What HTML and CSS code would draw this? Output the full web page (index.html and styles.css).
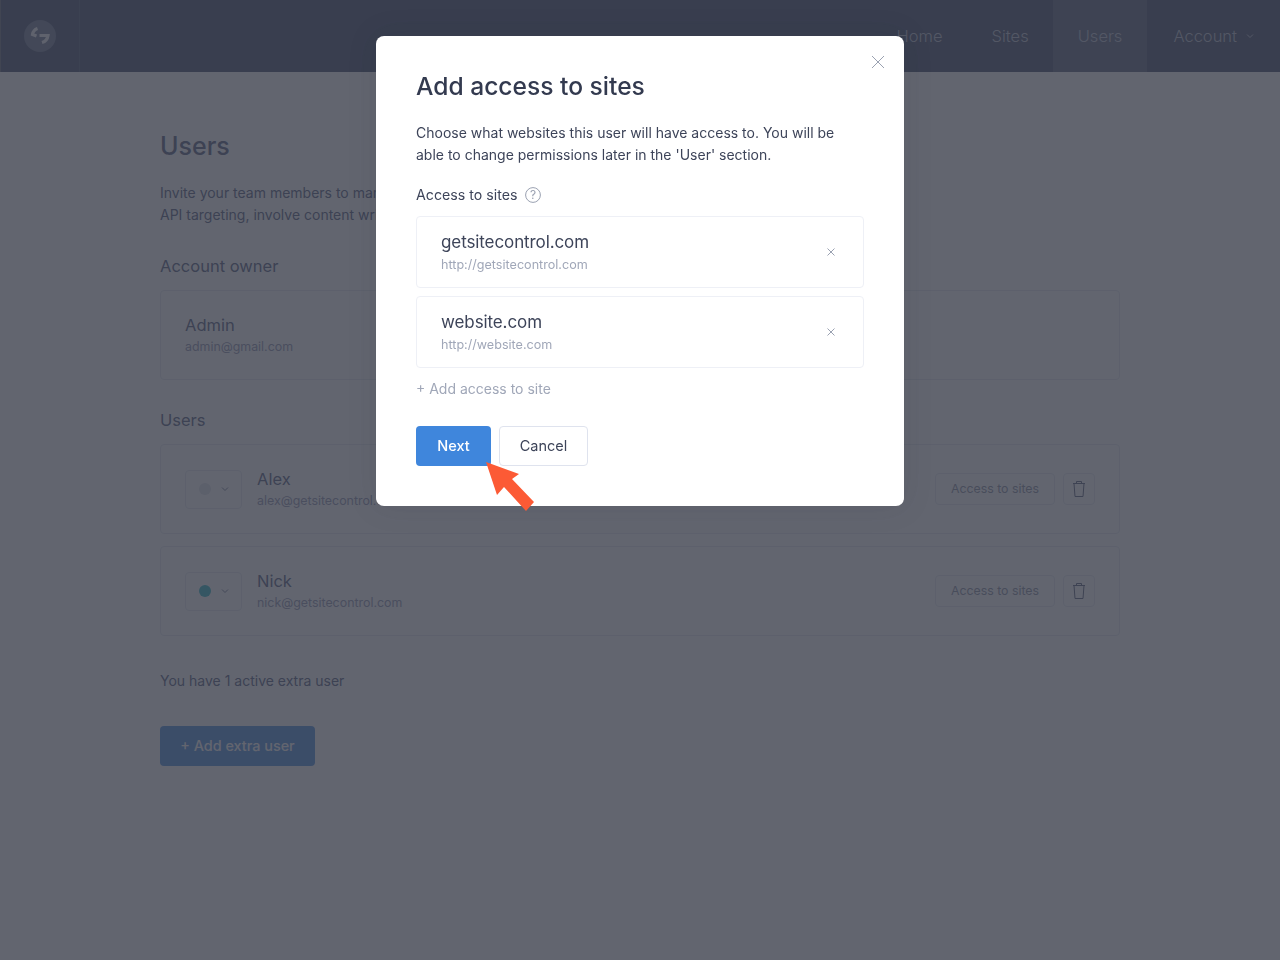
FILE: index.html
```html
<!DOCTYPE html>
<html lang="en">
<head>
  <meta charset="UTF-8" />
  <title>Users</title>
  <link rel="stylesheet" href="styles.css">
</head>
<body>
  <header class="topbar">
    <div class="logo-cell">
      <div class="logo">
        <svg width="20" height="20" viewBox="0 0 20 20" fill="none">
          <path d="M7.5 2.5 C4.5 3.5 3 5.5 2.5 8.5 L6.5 10" stroke="#f0f1f6" stroke-width="3.2"/>
          <path d="M9.5 9.5 H18 C17.5 13 15.5 15.5 12 16.5" stroke="#f0f1f6" stroke-width="3.2"/>
        </svg>
      </div>
    </div>
    <nav class="nav">
      <a class="nav-item">Home</a>
      <a class="nav-item">Sites</a>
      <a class="nav-item active">Users</a>
      <a class="nav-item account">Account
        <svg width="8" height="6" viewBox="0 0 8 6" fill="none"><path d="M1 1.5 L4 4.5 L7 1.5" stroke="currentColor"/></svg>
      </a>
    </nav>
  </header>

  <main class="content">
    <h1>Users</h1>
    <p class="intro">Invite your team members to manage<br>API targeting, involve content writers</p>

    <h2>Account owner</h2>
    <div class="card owner">
      <div class="name">Admin</div>
      <div class="email">admin@gmail.com</div>
    </div>

    <h2>Users</h2>
    <div class="card user">
      <div class="status"><span class="dot off"></span><svg class="chev" width="8" height="6" viewBox="0 0 8 6" fill="none"><path d="M1 1.5 L4 4.5 L7 1.5" stroke="currentColor"/></svg></div>
      <div class="who">
        <div class="name">Alex</div>
        <div class="email">alex@getsitecontrol.com</div>
      </div>
      <button class="ghost">Access to sites</button>
      <button class="ghost trash"><svg width="14" height="18" viewBox="0 0 14 18" fill="none" stroke="currentColor"><path d="M1 3.5 H13 M4.5 3.5 V1.5 H9.5 V3.5 M2 3.5 L3 16.5 H11 L12 3.5"/></svg></button>
    </div>
    <div class="card user">
      <div class="status"><span class="dot on"></span><svg class="chev" width="8" height="6" viewBox="0 0 8 6" fill="none"><path d="M1 1.5 L4 4.5 L7 1.5" stroke="currentColor"/></svg></div>
      <div class="who">
        <div class="name">Nick</div>
        <div class="email">nick@getsitecontrol.com</div>
      </div>
      <button class="ghost">Access to sites</button>
      <button class="ghost trash"><svg width="14" height="18" viewBox="0 0 14 18" fill="none" stroke="currentColor"><path d="M1 3.5 H13 M4.5 3.5 V1.5 H9.5 V3.5 M2 3.5 L3 16.5 H11 L12 3.5"/></svg></button>
    </div>

    <p class="extra">You have 1 active extra user</p>
    <button class="add-user">+ Add extra user</button>
  </main>

  <div class="overlay">
    <div class="modal">
      <svg class="close" width="14" height="14" viewBox="0 0 14 14" fill="none"><path d="M1 1 L13 13 M13 1 L1 13" stroke="#9aa1b1"/></svg>
      <h3>Add access to sites</h3>
      <p class="lead">Choose what websites this user will have access to. You will be able to change permissions later in the 'User' section.</p>
      <div class="label">Access to sites
        <svg width="16" height="16" viewBox="0 0 16 16" fill="none"><circle cx="8" cy="8" r="7.4" stroke="#9aa1b1"/><text x="8" y="12" text-anchor="middle" class="q">?</text></svg>
      </div>
      <div class="site">
        <div>
          <div class="site-name">getsitecontrol.com</div>
          <div class="site-url">http://getsitecontrol.com</div>
        </div>
        <svg width="8" height="8" viewBox="0 0 8 8" fill="none"><path d="M0.5 0.5 L7.5 7.5 M7.5 0.5 L0.5 7.5" stroke="#9aa1b1"/></svg>
      </div>
      <div class="site">
        <div>
          <div class="site-name">website.com</div>
          <div class="site-url">http://website.com</div>
        </div>
        <svg width="8" height="8" viewBox="0 0 8 8" fill="none"><path d="M0.5 0.5 L7.5 7.5 M7.5 0.5 L0.5 7.5" stroke="#9aa1b1"/></svg>
      </div>
      <div class="add-site">+ Add access to site</div>
      <div class="actions">
        <button class="btn primary">Next</button>
        <button class="btn">Cancel</button>
      </div>
      <svg class="arrow" width="50" height="50" viewBox="0 0 50 50"><path d="M0 0 L33 12 L26 17 L48 40 L40 49 L18 25 L11 33 Z" fill="#fc5a35"/></svg>
    </div>
  </div>
</body>
</html>
```

FILE: styles.css
```css
* {
  box-sizing: border-box;
}
body {
  margin: 0;
  height: 960px;
  overflow: hidden;
  font-family: 'Inter', sans-serif;
  background: #fff;
  color: #454f75;
}
.topbar {
  display: flex;
  justify-content: space-between;
  height: 72px;
  background: #323e5f;
  border-left: 1px solid #5a6170;
}
.logo-cell {
  width: 79px;
  display: flex;
  align-items: center;
  justify-content: center;
  border-right: 1px solid #445070;
}
.logo {
  width: 32px;
  height: 32px;
  border-radius: 50%;
  background: #646e8c;
  display: flex;
  align-items: center;
  justify-content: center;
}
.nav {
  display: flex;
}
.nav-item {
  display: flex;
  align-items: center;
  gap: 9px;
  padding: 0 24px 0 25px;
  font-size: 16.5px;
  font-weight: 300;
  color: #b4bacb;
}
.nav-item.active {
  padding: 0 25px;
  background: #4a5675;
}
.nav-item.account {
  padding: 0 26px;
}
.content {
  width: 960px;
  margin: 0 auto;
}
h1 {
  margin: 56px 0 0;
  font-size: 25px;
  line-height: 36px;
  font-weight: 500;
}
.intro {
  margin: 18px 0 0;
  font-size: 14px;
  line-height: 22px;
}
h2 {
  margin: 28px 0 12px;
  font-size: 16.5px;
  line-height: 24px;
  font-weight: 400;
}
.card {
  border: 1px solid #e4e7ef;
  border-radius: 4px;
  height: 90px;
  padding: 0 24px;
}
.owner {
  padding-top: 24px;
}
.user {
  display: flex;
  align-items: center;
  margin-bottom: 12px;
}
.name {
  font-size: 16.5px;
  line-height: 20px;
}
.email {
  margin-top: 3px;
  font-size: 12.4px;
  line-height: 18px;
  color: #878cab;
}
.status {
  width: 57px;
  height: 39px;
  border: 1px solid #e4e7ef;
  border-radius: 4px;
  display: flex;
  align-items: center;
  gap: 10px;
  padding-left: 13px;
  margin-right: 15px;
}
.dot {
  width: 12px;
  height: 12px;
  border-radius: 50%;
}
.dot.off {
  background: #dfe3ea;
}
.dot.on {
  background: #1fb3c0;
}
.chev {
  color: #6a7390;
}
.who {
  flex: 1;
}
.ghost {
  height: 32px;
  width: 120px;
  padding: 0 0 2px;
  background: transparent;
  border: 1px solid #e4e7ef;
  border-radius: 4px;
  font: 400 12.3px 'Inter', sans-serif;
  color: #7e869c;
}
.trash {
  width: 32px;
  margin-left: 8px;
  padding: 0;
  display: flex;
  align-items: center;
  justify-content: center;
  color: #4b5472;
}
.extra {
  margin: 34px 0 0;
  font-size: 14px;
  line-height: 22px;
}
.add-user {
  display: block;
  margin-top: 34px;
  width: 155px;
  height: 40px;
  padding-bottom: 2px;
  border: 0;
  border-radius: 4px;
  background: #3f86dc;
  color: #fff;
  font: 500 14.4px 'Inter', sans-serif;
}
.overlay {
  position: fixed;
  top: 0;
  left: 0;
  right: 0;
  bottom: 0;
  display: flex;
  justify-content: center;
  align-items: flex-start;
  padding-top: 36px;
  background: rgba(59, 62, 75, 0.8);
}
.modal {
  position: relative;
  width: 528px;
  height: 470px;
  padding: 34px 40px 0;
  background: #fff;
  border-radius: 8px;
  box-shadow: 0 0 30px rgba(40, 45, 60, 0.12);
}
.close {
  position: absolute;
  top: 19px;
  right: 19px;
}
h3 {
  margin: 0;
  font-size: 24.6px;
  line-height: 32px;
  font-weight: 500;
  color: #333a4f;
}
.lead {
  margin: 20px 0 0;
  font-size: 14px;
  line-height: 22px;
  color: #3d4459;
}
.label {
  display: flex;
  align-items: center;
  gap: 8px;
  margin-top: 18px;
  font-size: 14.2px;
  line-height: 22px;
  color: #3d4459;
}
.q {
  font: 400 12px 'Inter', sans-serif;
  fill: #9aa1b1;
}
.site {
  display: flex;
  align-items: center;
  justify-content: space-between;
  height: 72px;
  margin-top: 8px;
  padding: 0 28px 0 24px;
  border: 1px solid #eef0f6;
  border-radius: 4px;
}
.label + .site {
  margin-top: 10px;
}
.site-name {
  font-size: 17px;
  letter-spacing: -0.1px;
  line-height: 24px;
  color: #3d4459;
}
.site-url {
  margin-top: 2px;
  font-size: 12.6px;
  line-height: 18px;
  color: #a0a7b8;
}
.add-site {
  margin-top: 10px;
  font-size: 14px;
  line-height: 22px;
  color: #a0a7b8;
}
.actions {
  display: flex;
  gap: 8px;
  margin-top: 26px;
}
.btn {
  height: 40px;
  width: 89px;
  padding-bottom: 2px;
  background: #fff;
  border: 1px solid #dfe3ee;
  border-radius: 4px;
  font: 400 14.5px 'Inter', sans-serif;
  color: #3d4459;
}
.btn.primary {
  width: 75px;
  background: #3f86dc;
  border: 0;
  font-weight: 500;
  color: #fff;
}
.arrow {
  position: absolute;
  left: 110px;
  top: 426px;
}
```
